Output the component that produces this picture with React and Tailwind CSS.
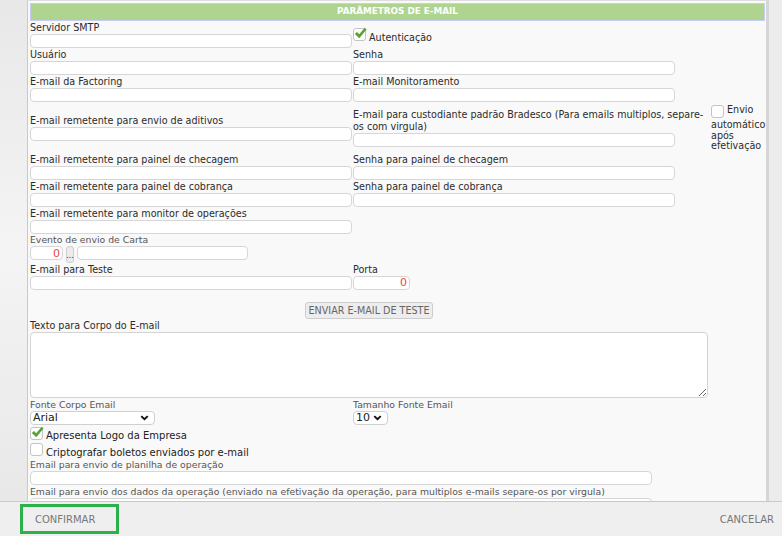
import React from "react";

// plain white text box used all over the form
function Box({ w = "w-[322px]", value, red }) {
  return (
    <input
      type="text"
      readOnly
      value={value || ""}
      className={`block h-[14px] ${w} rounded-[4px] border border-[#d6d6d6] bg-white px-[2px] text-right text-[11px] leading-[12px] outline-none ${
        red ? "text-[#f04343]" : "text-[#333]"
      }`}
    />
  );
}

function Label({ children, gray }) {
  return (
    <div
      className={
        gray
          ? "h-[12px] leading-[12px] text-[9.3px] text-[#555] whitespace-nowrap"
          : "h-[12px] leading-[12px] whitespace-nowrap"
      }
    >
      {children}
    </div>
  );
}

function Field({ label, gray, w, value, red }) {
  return (
    <div>
      <Label gray={gray}>{label}</Label>
      <Box w={w} value={value} red={red} />
    </div>
  );
}

function Check({ checked }) {
  return (
    <span className="relative inline-block h-[13px] w-[13px] shrink-0 rounded-[3px] border border-[#c4c4c4] bg-white align-[-3px]">
      {checked && (
        <svg
          viewBox="0 0 14 14"
          className="absolute left-[0px] top-[-2px] h-[13px] w-[13px]"
        >
          <path
            d="M1.2 7.6 L3.2 5.7 L5.6 8.2 L11.6 1.2 L13.2 2.6 L5.7 11.8 Z"
            fill="#58a42c"
            stroke="#3f8a1c"
            strokeWidth="0.4"
          />
        </svg>
      )}
    </span>
  );
}

function Select({ w, value }) {
  return (
    <div
      className={`flex h-[14px] ${w} items-center justify-between rounded-[4px] border border-[#d0d0d0] bg-white pl-[2px] pr-[5px] text-[11px] leading-[12px] text-[#222]`}
    >
      <span>{value}</span>
      <svg viewBox="0 0 10 7" className="h-[6px] w-[9px]">
        <path d="M1.2 1.3 L5 5 L8.8 1.3" fill="none" stroke="#111" strokeWidth="2.2" />
      </svg>
    </div>
  );
}

export default function App() {
  return (
    <div className="flex h-[536px] w-[782px] flex-col overflow-hidden bg-[#ececec] font-['DejaVu_Sans',sans-serif] text-[9.6px] text-[#2b2b2b]">
      <div className="flex h-[501px] overflow-hidden">
        <div className="w-[27px] shrink-0 bg-gradient-to-b from-[#e8e8e8] via-[#f4f4f4] to-[#e8e8e8]" />
        <div className="w-[742px] shrink-0 border-l border-t border-r-[3px] border-l-[#c9c9c9] border-t-[#dedede] border-r-[#d6d6d6] bg-[#f9f9f9] pl-[2px] pr-[1px] pt-[2px]">
          <div className="flex h-[18px] items-center justify-center border border-[#c6cdf6] bg-[#afd48f] text-[8.8px] font-bold text-white">
            PARÂMETROS DE E-MAIL
          </div>

          <div className="grid h-[27px] grid-cols-[323px_355px_57px] items-center">
            <Field label="Servidor SMTP" />
            <div className="flex items-end gap-[3px] pt-[3px]">
              <span className="mb-[3px] flex"><Check checked /></span>
              <span className="leading-[12px]">Autenticação</span>
            </div>
          </div>

          <div className="grid h-[27px] grid-cols-[323px_355px_57px] items-center">
            <Field label="Usuário" />
            <Field label="Senha" />
          </div>

          <div className="grid h-[27px] grid-cols-[323px_355px_57px] items-center">
            <Field label="E-mail da Factoring" />
            <Field label="E-mail Monitoramento" />
          </div>

          <div className="grid h-[51px] grid-cols-[323px_355px_57px] items-center">
            <Field label="E-mail remetente para envio de aditivos" />
            <div>
              <div className="whitespace-nowrap leading-[12px]">
                E-mail para custodiante padrão Bradesco (Para emails multiplos, separe-
                <br />
                os com virgula)
              </div>
              <Box />
            </div>
            <div className="pl-[3px] pt-[2px] leading-[10.5px]">
              <span className="inline-block h-[15px] align-top"><Check /></span> Envio automático após efetivação
            </div>
          </div>

          <div className="grid h-[27px] grid-cols-[323px_355px_57px] items-center">
            <Field label="E-mail remetente para painel de checagem" />
            <Field label="Senha para painel de checagem" />
          </div>

          <div className="grid h-[27px] grid-cols-[323px_355px_57px] items-center">
            <Field label="E-mail remetente para painel de cobrança" />
            <Field label="Senha para painel de cobrança" />
          </div>

          <div className="grid h-[27px] grid-cols-[323px_355px_57px] items-center">
            <Field label="E-mail remetente para monitor de operações" />
          </div>

          <div className="h-[29px]">
            <Label gray>Evento de envio de Carta</Label>
            <div className="flex items-start gap-[3px]">
              <Box w="w-[33px]" value="0" red />
              <div className="flex h-[17px] w-[8px] items-end justify-center rounded-[3px] border border-[#cfcfcf] bg-[#ececec] pb-[2px] text-[8px] leading-[8px] text-[#333]">
                ...
              </div>
              <Box w="w-[171px]" />
            </div>
          </div>

          <div className="grid h-[27px] grid-cols-[323px_355px_57px] items-center">
            <Field label="E-mail para Teste" />
            <Field label="Porta" w="w-[57px]" value="0" red />
          </div>

          <div className="flex h-[30px] w-[678px] items-end justify-center pb-[1px]">
            <button className="h-[17px] rounded-[3px] border border-[#cdcdcd] bg-[#ededed] px-[3px] text-[9.6px] leading-[15px] text-[#666]">
              ENVIAR E-MAIL DE TESTE
            </button>
          </div>

          <Label>Texto para Corpo do E-mail</Label>
          <textarea
            readOnly
            className="block h-[66px] w-[678px] rounded-[4px] border border-[#d3d3d3] bg-white outline-none"
          />

          <div className="grid grid-cols-[323px_355px] pt-[1px]">
            <div>
              <Label gray>Fonte Corpo Email</Label>
              <Select w="w-[125px]" value="Arial" />
            </div>
            <div>
              <Label gray>Tamanho Fonte Email</Label>
              <Select w="w-[35px]" value="10" />
            </div>
          </div>

          <div className="flex h-[18px] items-end gap-[3px] pb-[1px] text-[10px] text-[#222]">
            <span className="mb-[2px] flex"><Check checked /></span>
            <span className="leading-[12px]">Apresenta Logo da Empresa</span>
          </div>
          <div className="flex h-[16px] items-end gap-[3px] text-[10px] text-[#222]">
            <span className="mb-[3px] flex"><Check /></span>
            <span className="leading-[12px]">Criptografar boletos enviados por e-mail</span>
          </div>

          <Field gray label="Email para envio de planilha de operação" w="w-[622px]" />
          <div className="pt-[1px]">
            <Field
              gray
              label="Email para envio dos dados da operação (enviado na efetivação da operação, para multiplos e-mails separe-os por virgula)"
              w="w-[622px]"
            />
          </div>
        </div>
      </div>

      <div className="flex h-[35px] items-center justify-between border-t border-[#c9c9c9] bg-[#efefef] pl-[20px] pr-[8px] text-[10px] text-[#777]">
        <div className="flex h-[30px] w-[99px] items-center border-[3px] border-[#2eb04b] pl-[12px]">
          CONFIRMAR
        </div>
        <div>CANCELAR</div>
      </div>
    </div>
  );
}
